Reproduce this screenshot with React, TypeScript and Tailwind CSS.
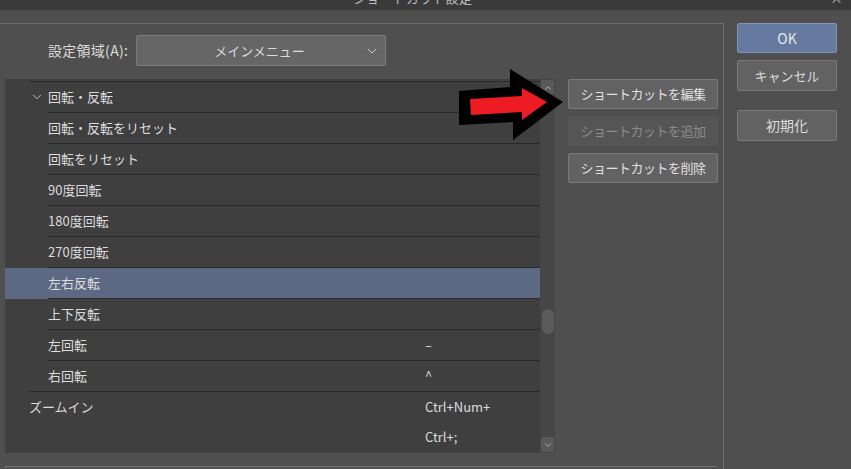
import { ChevronDown, ChevronUp } from "lucide-react";

type Row = {
  label: string;
  indent: "group" | "child" | "top";
  keys?: string[];
  selected?: boolean;
  sep?: "group" | "child" | "none";
  expander?: boolean;
};

const rows: Row[] = [
  { label: "回転・反転", indent: "group", expander: true, sep: "child" },
  { label: "回転・反転をリセット", indent: "child", sep: "child" },
  { label: "回転をリセット", indent: "child", sep: "child" },
  { label: "90度回転", indent: "child", sep: "child" },
  { label: "180度回転", indent: "child", sep: "child" },
  { label: "270度回転", indent: "child", sep: "child" },
  { label: "左右反転", indent: "child", selected: true, sep: "child" },
  { label: "上下反転", indent: "child", sep: "child" },
  { label: "左回転", indent: "child", keys: ["–"], sep: "child" },
  { label: "右回転", indent: "child", keys: ["^"], sep: "group" },
  { label: "ズームイン", indent: "top", keys: ["Ctrl+Num+", "Ctrl+;"], sep: "none" },
];

function ListRow({ row }: { row: Row }) {
  const lines = row.keys && row.keys.length > 1 ? row.keys.length : 1;
  const pad =
    row.indent === "child" ? "pl-[43px]" : row.indent === "group" ? "pl-[25px]" : "pl-[24px]";
  return (
    <div className={`flex flex-col ${row.selected ? "bg-[#5d6883]" : ""}`}>
      {Array.from({ length: lines }).map((_, i) => (
        <div key={i} className="flex h-[30px] items-center">
          <div className={`flex w-[420px] items-center ${pad}`}>
            {i === 0 && (
              <>
                {row.expander && (
                  <ChevronDown className="mr-[4px] h-[14px] w-[14px] text-[#d6d6d6]" strokeWidth={1.5} />
                )}
                <span>{row.label}</span>
              </>
            )}
          </div>
          <span>{row.keys ? row.keys[i] : ""}</span>
        </div>
      ))}
      {row.sep === "child" && <div className="ml-[43px] h-px bg-[#2a2a2a]" />}
      {row.sep === "group" && <div className="ml-[24px] h-px bg-[#2a2a2a]" />}
      {row.sep === "none" && <div className="h-px" />}
    </div>
  );
}

function SideButton({ label, disabled }: { label: string; disabled?: boolean }) {
  return (
    <div
      className={`flex h-[30px] w-[150px] items-center justify-center rounded-[2px] border text-[13px] tracking-[-0.04em] ${
        disabled
          ? "border-transparent bg-[#555555] text-[#8c8c8c]"
          : "border-[#7a7a7a] bg-[#626262] text-[#e0e0e0]"
      }`}
    >
      {label}
    </div>
  );
}

export default function App() {
  return (
    <div className="relative h-[469px] w-[851px] overflow-hidden bg-[#4f4f4f] font-['Noto_Sans_CJK_JP','Noto_Sans',sans-serif] text-[13px] text-[#dcdcdc]">
      {/* title bar */}
      <div className="flex h-[10px] overflow-hidden bg-[#3a3a3a] text-[#bdbdbd]">
        <span className="ml-[353px] -mt-[9px] leading-[13px] tracking-[0.02em]">ショートカット設定</span>
        <span className="ml-auto mr-[8px] -mt-[9px] leading-[13px]">×</span>
      </div>

      <div className="mt-[13px] flex">
        {/* group box */}
        <div className="h-[460px] w-[724px] border-t border-r border-[#707070]">
          <div className="mt-[11px] flex items-center">
            <span className="ml-[48px] w-[88px] text-[14px] tracking-[0.02em]">設定領域(A):</span>
            <div className="flex h-[31px] w-[250px] items-center rounded-[2px] border border-[#7a7a7a] bg-[#666666]">
              <span className="flex-1 pl-[18px] text-center">メインメニュー</span>
              <ChevronDown className="mr-[5px] h-[16px] w-[16px] text-[#c8c8c8]" strokeWidth={1.5} />
            </div>
          </div>

          <div className="mt-[13px] flex">
            {/* list */}
            <div className="ml-[5px] flex h-[374px] w-[550px] bg-[#3f3f3f]">
              <div className="flex w-[535px] flex-col overflow-hidden">
                <div className="flex h-[3px] flex-col justify-end">
                  <div className="ml-[24px] h-px bg-[#2a2a2a]" />
                </div>
                {rows.map((r) => (
                  <ListRow key={r.label} row={r} />
                ))}
              </div>
              {/* scrollbar */}
              <div className="flex w-[15px] flex-col items-center bg-[#464646] py-[1px]">
                <div className="flex h-[15px] w-[13px] items-center justify-center rounded-[2px] bg-[#595959]">
                  <ChevronUp className="h-[10px] w-[10px] text-[#bdbdbd]" strokeWidth={2} />
                </div>
                <div className="mt-[214px] h-[25px] w-[12px] rounded-full bg-[#5b5b5b]" />
                <div className="mt-auto flex h-[15px] w-[13px] items-center justify-center rounded-[2px] bg-[#595959]">
                  <ChevronDown className="h-[10px] w-[10px] text-[#bdbdbd]" strokeWidth={2} />
                </div>
              </div>
            </div>

            {/* action buttons */}
            <div className="ml-[13px] flex flex-col gap-[7px]">
              <SideButton label="ショートカットを編集" />
              <SideButton label="ショートカットを追加" disabled />
              <SideButton label="ショートカットを削除" />
            </div>
          </div>

          <div className="ml-[5px] mt-[13px] h-[20px] w-[712px] border-t border-l border-[#707070]" />
        </div>

        {/* right column */}
        <div className="ml-[13px] flex flex-col">
          <div className="flex h-[30px] w-[100px] items-center justify-center rounded-[2px] border border-[#8493b5] bg-[#6679a0] text-[14px] text-[#e6e6e6]">
            OK
          </div>
          <div className="mt-[7px] flex h-[31px] w-[100px] items-center justify-center rounded-[2px] border border-[#7a7a7a] bg-[#626262]">
            キャンセル
          </div>
          <div className="mt-[19px] flex h-[31px] w-[100px] items-center justify-center rounded-[2px] border border-[#7a7a7a] bg-[#626262] text-[14px]">
            初期化
          </div>
        </div>
      </div>

      {/* red arrow annotation */}
      <svg className="absolute left-[455px] top-[64px]" width="112" height="80" viewBox="0 0 112 80">
        <polygon points="4,27 55,23 55,5 108,38 58,76 58,58 4,61" fill="#000" />
        <polygon points="15,35 67,32 67,24 92,38 67,56 67,48 16,51" fill="#ed1c24" />
      </svg>
    </div>
  );
}
